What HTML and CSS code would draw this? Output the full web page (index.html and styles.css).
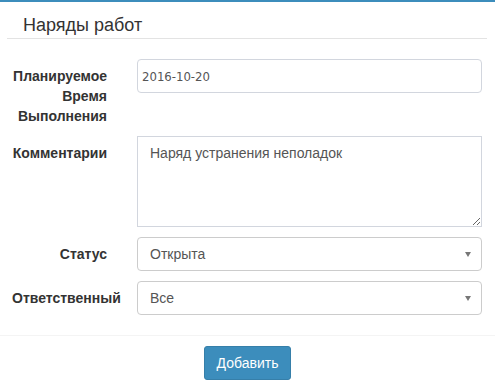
FILE: index.html
```html
<!DOCTYPE html>
<html lang="ru">
<head>
<meta charset="utf-8">
<title>Наряды работ</title>
<link rel="stylesheet" href="styles.css">
</head>
<body>
<div class="box">
  <div class="box-header">
    <h3 class="box-title">Наряды работ</h3>
  </div>
  <form class="box-body">
    <div class="form-group">
      <label class="control-label">Планируемое Время Выполнения</label>
      <input class="form-control date" type="text" value="2016-10-20">
    </div>
    <div class="form-group">
      <label class="control-label">Комментарии</label>
      <textarea class="form-control area">Наряд устранения неполадок</textarea>
    </div>
    <div class="form-group">
      <label class="control-label">Статус</label>
      <div class="select-wrap">
        <select class="form-control select"><option>Открыта</option></select>
      </div>
    </div>
    <div class="form-group">
      <label class="control-label">Ответственный</label>
      <div class="select-wrap">
        <select class="form-control select"><option>Все</option></select>
      </div>
    </div>
  </form>
  <div class="box-footer">
    <button type="button" class="btn">Добавить</button>
  </div>
</div>
</body>
</html>
```

FILE: styles.css
```css
* { box-sizing: border-box; }

body {
  margin: 0;
  background: #fff;
  font-family: "Liberation Sans", Arial, sans-serif;
  font-size: 14px;
  line-height: 20px;
  color: #333;
}

.box {
  border-top: 2px solid #3c8dbc;
  background: #fff;
}

.box-header {
  margin: 0 8px 0 7px;
  padding: 13px 16px 3px;
  border-bottom: 1px solid #e3e3e3;
}

.box-title {
  margin: 0;
  font-size: 18px;
  font-weight: normal;
  line-height: 20px;
  color: #333;
}

.box-body {
  margin: 0;
  padding: 20px 13px 20px 12px;
  display: flex;
  flex-direction: column;
  gap: 10px;
}

.form-group {
  display: grid;
  grid-template-columns: 95px 1fr;
  column-gap: 30px;
  align-items: start;
}

.control-label {
  padding-top: 7px;
  text-align: right;
  font-weight: bold;
  color: #333;
  line-height: 20px;
}

.form-control {
  display: block;
  width: 100%;
  height: 34px;
  margin: 0;
  padding: 6px 12px;
  border: 1px solid #d2d6de;
  border-radius: 4px;
  background: #fff;
  font-family: "Liberation Sans", Arial, sans-serif;
  font-size: 14px;
  line-height: 20px;
  color: #555;
  outline: none;
}

.date {
  padding-left: 4px;
  font-family: "DejaVu Sans Condensed", "DejaVu Sans", sans-serif;
  font-stretch: condensed;
  font-size: 13px;
}

.area {
  height: 91px;
  border-radius: 0;
  resize: vertical;
}

.select-wrap {
  position: relative;
}

.select {
  appearance: none;
  -webkit-appearance: none;
  border-color: #ccc;
  padding-left: 12px;
}

.select-wrap::after {
  content: "";
  position: absolute;
  right: 11px;
  top: 15px;
  border-left: 3px solid transparent;
  border-right: 3px solid transparent;
  border-top: 5px solid #777;
  pointer-events: none;
}

.box-footer {
  border-top: 1px solid #f4f4f4;
  padding: 10px;
  display: flex;
  justify-content: center;
}

.btn {
  height: 34px;
  padding: 6px 12px;
  border: 1px solid #367fa9;
  border-radius: 3px;
  background: #3c8dbc;
  color: #fff;
  font-family: "Liberation Sans", Arial, sans-serif;
  font-size: 14px;
  line-height: 20px;
  cursor: pointer;
}
```
